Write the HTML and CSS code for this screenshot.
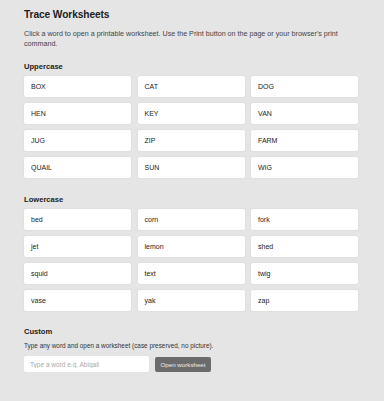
FILE: index.html
```html
<!DOCTYPE html>
<html lang="en">
<head>
    <meta charset="UTF-8">
    <meta name="viewport" content="width=device-width, initial-scale=1.0">
    <title>Trace Worksheets</title>
    <link rel="stylesheet" href="styles.css">
</head>
<body>
    <div class="page">
        <h1>Trace Worksheets</h1>
        <p class="intro">Click a word to open a printable worksheet. Use the Print button on the page or your browser's print command.</p>

        <h2>Uppercase</h2>
        <div class="words">
            <a class="word" href="#">BOX</a>
            <a class="word" href="#">CAT</a>
            <a class="word" href="#">DOG</a>
            <a class="word" href="#">HEN</a>
            <a class="word" href="#">KEY</a>
            <a class="word" href="#">VAN</a>
            <a class="word" href="#">JUG</a>
            <a class="word" href="#">ZIP</a>
            <a class="word" href="#">FARM</a>
            <a class="word" href="#">QUAIL</a>
            <a class="word" href="#">SUN</a>
            <a class="word" href="#">WIG</a>
        </div>

        <h2 class="lower">Lowercase</h2>
        <div class="words">
            <a class="word" href="#">bed</a>
            <a class="word" href="#">corn</a>
            <a class="word" href="#">fork</a>
            <a class="word" href="#">jet</a>
            <a class="word" href="#">lemon</a>
            <a class="word" href="#">shed</a>
            <a class="word" href="#">squid</a>
            <a class="word" href="#">text</a>
            <a class="word" href="#">twig</a>
            <a class="word" href="#">vase</a>
            <a class="word" href="#">yak</a>
            <a class="word" href="#">zap</a>
        </div>

        <h2 class="custom-title">Custom</h2>
        <p class="hint">Type any word and open a worksheet (case preserved, no picture).</p>
        <form class="custom" onsubmit="return false;">
            <input type="text" placeholder="Type a word e.g. Abigail">
            <button type="submit">Open worksheet</button>
        </form>
    </div>
</body>
</html>
```

FILE: styles.css
```css
body {
    font-family: "Liberation Sans", Arial, sans-serif;
    margin: 0;
    padding: 0;
    background: #e5e5e5;
    color: #222;
}
.page {
    width: 334px;
    padding: 7px 0 20px 24px;
}
h1 {
    font-size: 10.2px;
    line-height: 16px;
    margin: 0;
    font-weight: bold;
    letter-spacing: -0.1px;
}
.intro {
    font-size: 7.15px;
    line-height: 10px;
    margin: 6px 0 0;
    color: #444;
}
h2 {
    font-size: 7.6px;
    line-height: 11px;
    font-weight: bold;
    margin: 11.5px 0 4.5px;
}
h2.lower {
    margin-top: 15.5px;
}
h2.custom-title {
    margin-top: 14.5px;
}
.words {
    display: grid;
    grid-template-columns: repeat(3, 1fr);
    gap: 6px 6.5px;
}
.word {
    display: flex;
    align-items: center;
    height: 21px;
    padding: 0 7px;
    background: white;
    border-radius: 2px;
    box-shadow: 0 0 2px rgba(0, 0, 0, 0.08);
    color: #222;
    font-size: 7px;
    text-decoration: none;
}
.hint {
    font-size: 6.4px;
    line-height: 10px;
    margin: 4.5px 0 0;
    color: #333;
}
.custom {
    display: flex;
    align-items: center;
    gap: 6px;
    margin-top: 5px;
}
.custom input {
    width: 125px;
    height: 16px;
    box-sizing: border-box;
    border: none;
    border-radius: 2px;
    padding: 0 6px;
    font-family: inherit;
    font-size: 6.5px;
    background: white;
}
.custom input::placeholder {
    color: #aaa;
}
.custom button {
    height: 15px;
    width: 56px;
    padding: 0;
    border: none;
    border-radius: 2px;
    background: #6b6b6b;
    color: #eee;
    font-family: inherit;
    font-size: 6.2px;
    cursor: pointer;
}
```
